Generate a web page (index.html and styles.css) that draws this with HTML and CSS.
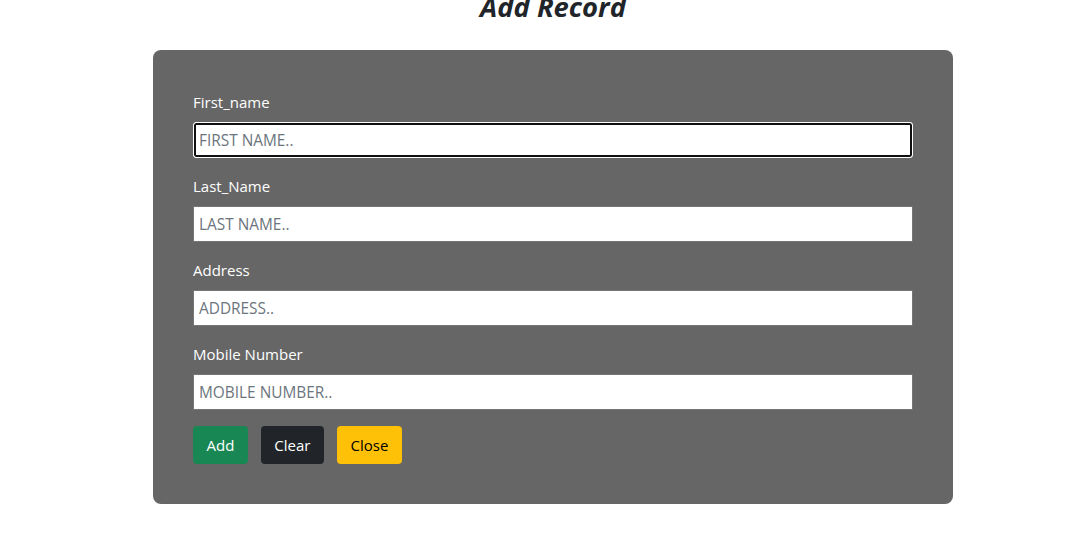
FILE: index.html
```html
<!DOCTYPE html>
<html lang="en">
<head>
<meta charset="utf-8">
<title>Add Record</title>
<link rel="stylesheet" href="styles.css">
</head>
<body>
<div class="page">
  <h2 class="title">Add Record</h2>
  <form class="card">
    <div class="field">
      <label class="label" for="fn">First_name</label>
      <input class="input" id="fn" type="text" placeholder="FIRST NAME.." autofocus>
    </div>
    <div class="field">
      <label class="label" for="ln">Last_Name</label>
      <input class="input" id="ln" type="text" placeholder="LAST NAME..">
    </div>
    <div class="field">
      <label class="label" for="ad">Address</label>
      <input class="input" id="ad" type="text" placeholder="ADDRESS..">
    </div>
    <div class="field">
      <label class="label" for="mn">Mobile Number</label>
      <input class="input" id="mn" type="text" placeholder="MOBILE NUMBER..">
    </div>
    <div class="actions">
      <button type="button" class="btn btn-add">Add</button>
      <button type="button" class="btn btn-clear">Clear</button>
      <button type="button" class="btn btn-close">Close</button>
    </div>
  </form>
</div>
</body>
</html>
```
FILE: styles.css
```css
html, body {
  margin: 0;
  padding: 0;
  background: #fff;
}
body {
  font-family: "Segoe UI", "Open Sans", "Noto Sans", sans-serif;
  font-size: 16px;
  line-height: 24px;
  color: #212529;
}
.page {
  width: 800px;
  margin-left: 153px;
  display: flex;
  flex-direction: column;
}
.title {
  margin: -9px 0 0 0;
  height: 59px;
  font-size: 27.4px;
  line-height: 32px;
  font-weight: 700;
  font-style: italic;
  text-align: center;
  color: #212529;
}
.card {
  background: #666666;
  border-radius: 8px;
  padding: 40px;
  display: flex;
  flex-direction: column;
}
.field {
  display: flex;
  flex-direction: column;
  margin-bottom: 16px;
}
.label {
  color: #fff;
  font-size: 15px;
  margin-bottom: 8px;
}
.input {
  box-sizing: border-box;
  height: 36px;
  width: 720px;
  border: 1px solid #767676;
  border-radius: 0;
  padding: 0 5px;
  font-family: inherit;
  font-size: 15.4px;
  color: #212529;
  background: #fff;
  outline: none;
}
.input::placeholder {
  color: #6c757d;
}
.input:focus {
  border: 1px solid #fff;
  border-radius: 3px;
  box-shadow: inset 0 0 0 2px #101010;
}
.actions {
  display: flex;
  gap: 13px;
}
.btn {
  height: 38px;
  padding: 0 12.5px;
  border: 1px solid transparent;
  border-radius: 4px;
  font-family: inherit;
  font-size: 15px;
  line-height: 24px;
  cursor: pointer;
}
.btn-add {
  background: #198754;
  color: #fff;
}
.btn-clear {
  background: #212529;
  color: #fff;
}
.btn-close {
  background: #ffc107;
  color: #000;
}
```
